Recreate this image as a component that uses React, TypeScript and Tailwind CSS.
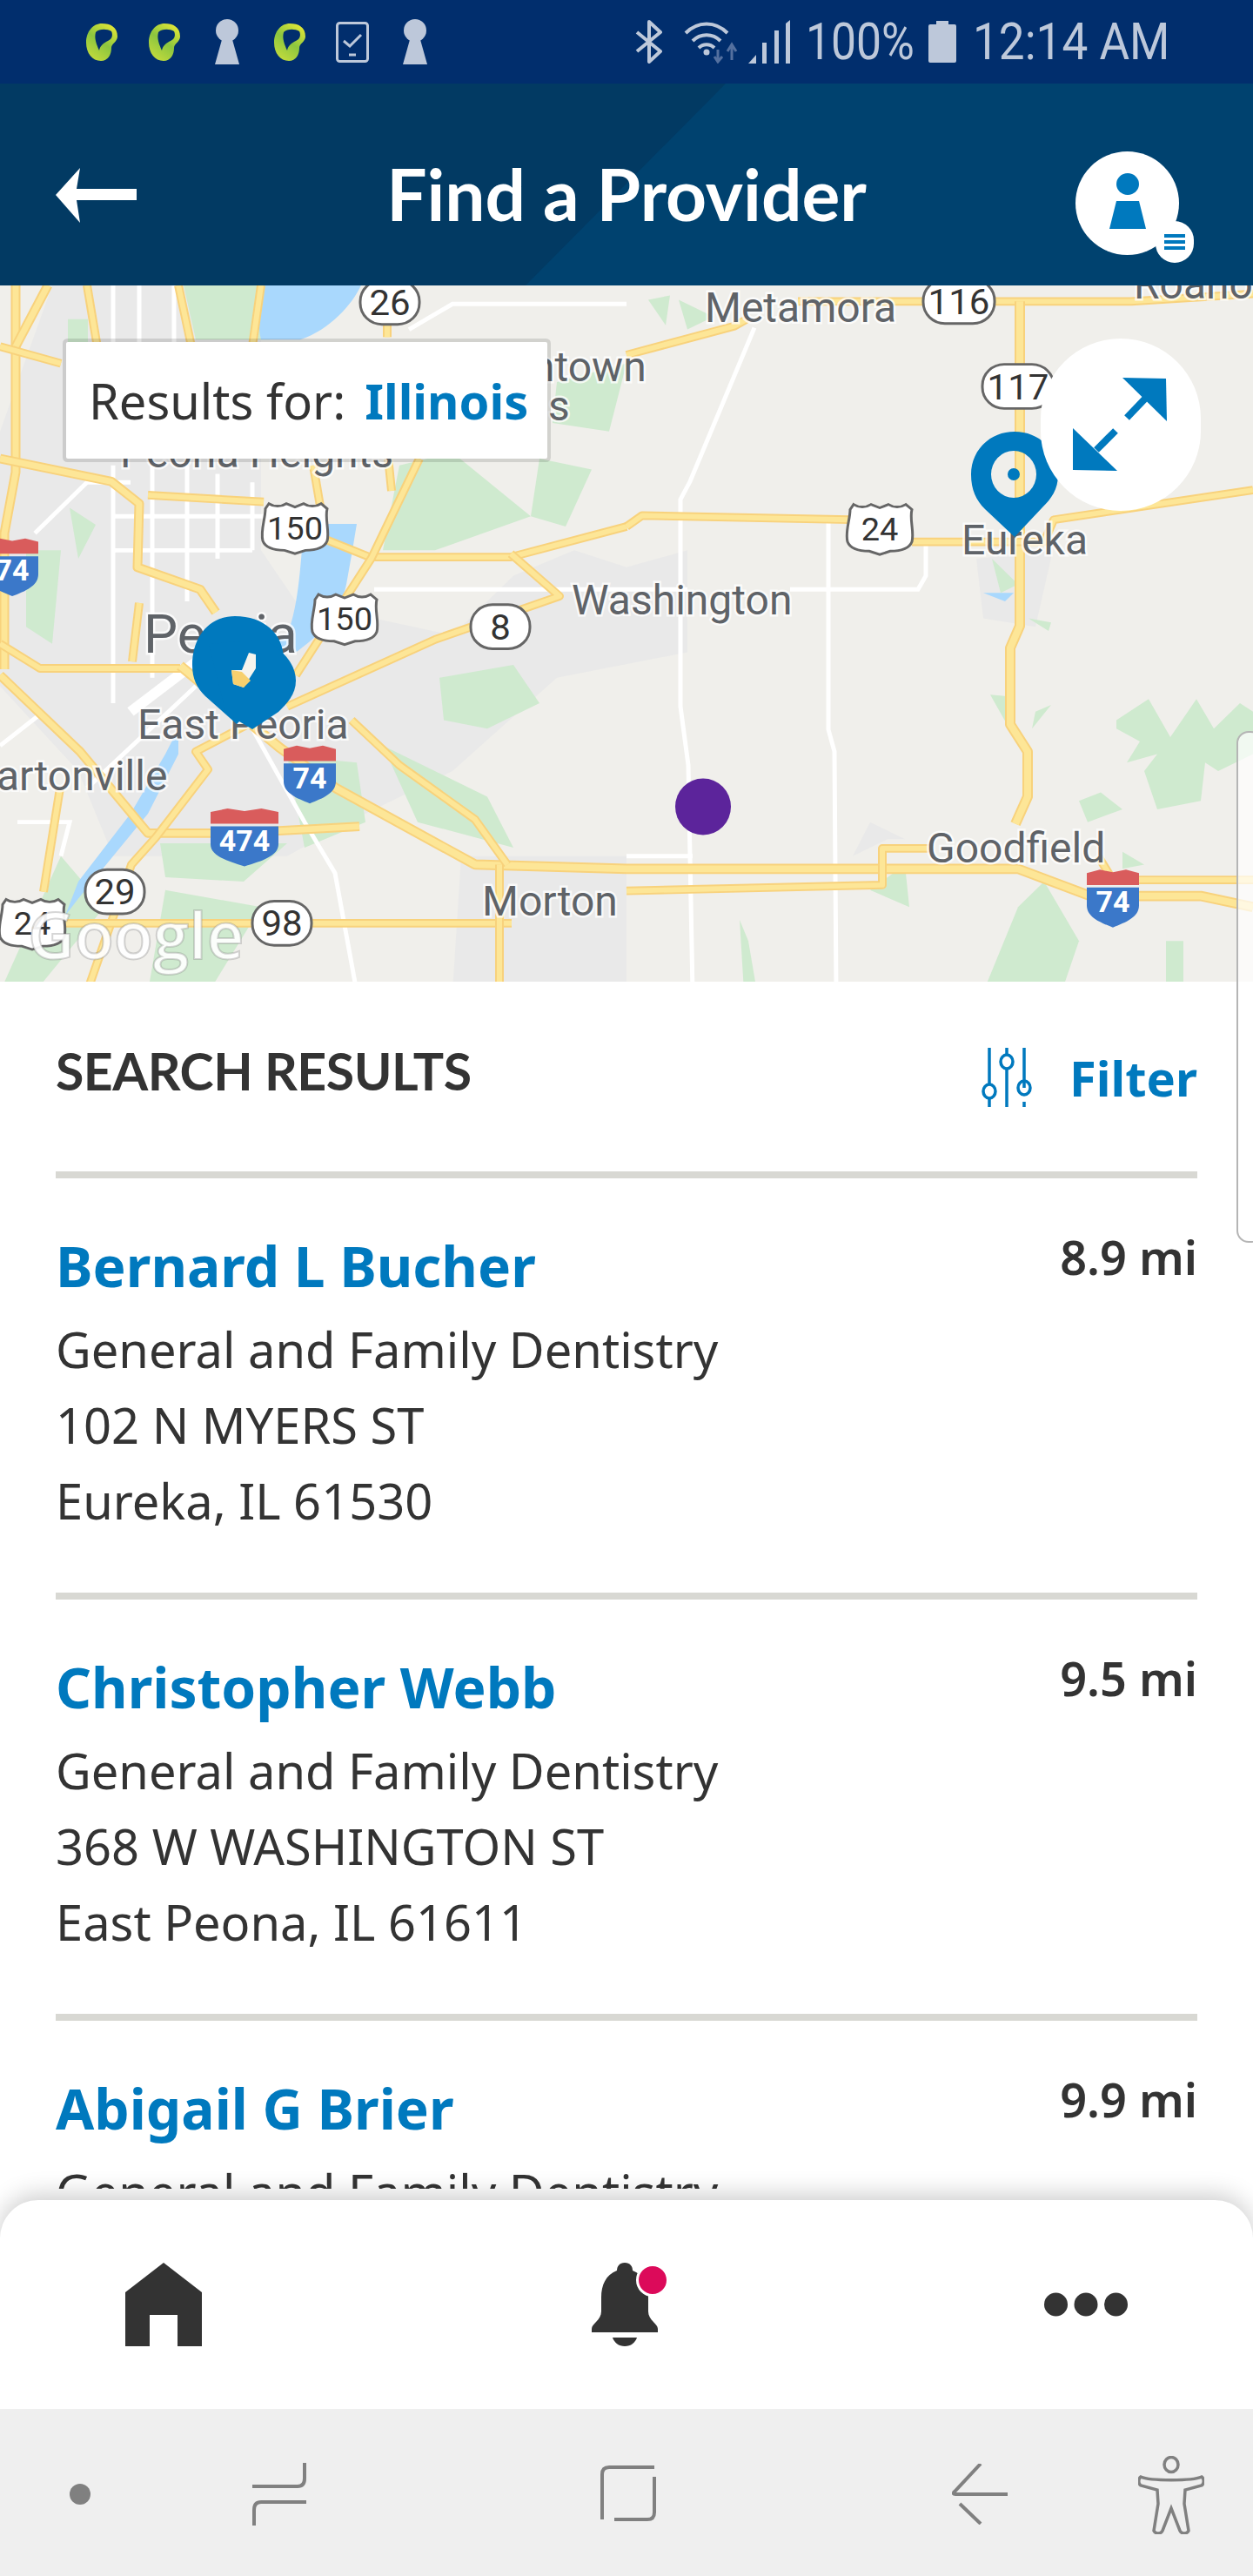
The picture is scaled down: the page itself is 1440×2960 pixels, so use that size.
const providers = [
  { name: "Bernard L Bucher", dist: "8.9 mi", specialty: "General and Family Dentistry", street: "102 N MYERS ST", city: "Eureka, IL 61530" },
  { name: "Christopher Webb", dist: "9.5 mi", specialty: "General and Family Dentistry", street: "368 W WASHINGTON ST", city: "East Peona, IL 61611" },
  { name: "Abigail G Brier", dist: "9.9 mi", specialty: "General and Family Dentistry", street: "", city: "" },
];

function Leaf({ id }: { id: string }) {
  return (
    <svg width="36" height="43" viewBox="0 0 36 43">
      <defs>
        <linearGradient id={id} x1="0.8" y1="0" x2="0.2" y2="1">
          <stop offset="0" stopColor="#e4e836" />
          <stop offset="0.5" stopColor="#8cc63f" />
          <stop offset="1" stopColor="#c6dc3c" />
        </linearGradient>
      </defs>
      <path
        fillRule="evenodd"
        fill={`url(#${id})`}
        d="M18 0C28 0 36 4 36 15C36 21 29 23 29 28C29 36 25 43 17 43C7 43 0 34 0 22C0 9 8 0 18 0ZM11 10C9 17 12 24 15 31C16 25 21 22 25 20C30 18 31 13 29 9C24 6 15 6 11 10Z"
      />
    </svg>
  );
}

function Keyhole() {
  return (
    <svg width="28" height="52" viewBox="0 0 28 52" fill="#bdc8da">
      <circle cx="14" cy="13" r="13" />
      <path d="M9 20H19L28 52H0Z" />
    </svg>
  );
}

function StatusBar() {
  return (
    <div className="flex h-[96px] items-center justify-between bg-[#012e6d] pl-[99px] pr-[100px] text-[#bdc8da]">
      <div className="flex items-center">
        <Leaf id="leaf-a" />
        <div className="ml-[36px]"><Leaf id="leaf-b" /></div>
        <div className="ml-[40px]"><Keyhole /></div>
        <div className="ml-[40px]"><Leaf id="leaf-c" /></div>
        <svg className="ml-[35px]" width="38" height="47" viewBox="0 0 38 47" fill="none" stroke="#bdc8da">
          <rect x="1.5" y="1.5" width="35" height="44" rx="3" strokeWidth="3" />
          <path d="M9 22L16 28L29 15" strokeWidth="3" />
          <path d="M15 38H23" strokeWidth="3" />
        </svg>
        <div className="ml-[39px]"><Keyhole /></div>
      </div>
      <div className="flex items-center">
        <svg width="32" height="50" viewBox="0 0 32 50" fill="none" stroke="#bdc8da" strokeWidth="4">
          <path d="M2 14L29 36L16 48V2L29 14L2 36" strokeLinejoin="round" />
        </svg>
        <svg className="ml-[24px]" width="64" height="50" viewBox="0 0 64 50" fill="none">
          <path d="M2 15C16 1 36 1 50 15" stroke="#bdc8da" strokeWidth="4" />
          <path d="M10 24C19 15 33 15 42 24" stroke="#bdc8da" strokeWidth="4" />
          <path d="M17 32C22 27 30 27 35 32" stroke="#bdc8da" strokeWidth="4" />
          <circle cx="26" cy="37" r="3.5" fill="#bdc8da" />
          <path d="M39 34V46M35 42L39 48L44 42" stroke="#54709f" strokeWidth="3" />
          <path d="M55 46V30M50 36L55 28L60 36" stroke="#54709f" strokeWidth="3" />
        </svg>
        <svg className="ml-[10px]" width="48" height="50" viewBox="0 0 48 50" fill="#bdc8da">
          <path d="M0 50L9 40V50Z" />
          <rect x="16" y="26" width="5" height="24" />
          <rect x="30" y="12" width="5" height="38" />
          <path d="M43 4L48 0V50H43Z" />
        </svg>
        <span className="ml-[18px] w-[132px] origin-left scale-x-[0.86] font-['Roboto',sans-serif] text-[60px] leading-[50px] whitespace-nowrap">100%</span>
        <svg className="ml-[9px]" width="32" height="48" viewBox="0 0 32 48" fill="#bdc8da">
          <path d="M9 0H23V4H30Q32 4 32 6V46Q32 48 30 48H2Q0 48 0 46V6Q0 4 2 4H9Z" />
        </svg>
        <span className="ml-[19px] w-[222px] origin-left scale-x-[0.885] font-['Roboto',sans-serif] text-[60px] leading-[50px] whitespace-nowrap">12:14 AM</span>
      </div>
    </div>
  );
}

function Header() {
  return (
    <div className="relative flex h-[232px] items-center bg-[#00426f]">
      <div className="absolute inset-0 bg-[#023a63] [clip-path:polygon(0_0,834px_0,604px_100%,0_100%)]" />
      <svg className="absolute left-[64px] top-[97px]" width="94" height="64" viewBox="0 0 94 64" fill="#fff">
        <path d="M0 31L28 0L24 24H93V37H24L28 63Z" />
      </svg>
      <h1 className="relative w-full pt-[20px] text-center font-['Lato',sans-serif] text-[82px] font-bold leading-none text-white">Find a Provider</h1>
      <div className="absolute left-[1236px] top-[78px] flex h-[119px] w-[119px] items-start justify-center rounded-full bg-white">
        <svg className="mt-[25px]" width="42" height="64" viewBox="0 0 42 64" fill="#0079be">
          <ellipse cx="21" cy="12.5" rx="13" ry="12.5" />
          <path d="M8 32H34L42 64H0Z" />
        </svg>
      </div>
      <div className="absolute left-[1328px] top-[158px] flex h-[48px] w-[44px] flex-col items-center justify-center gap-[3px] rounded-full bg-white">
        <div className="h-[4px] w-[24px] bg-[#0079be]" />
        <div className="h-[4px] w-[24px] bg-[#0079be]" />
        <div className="h-[4px] w-[24px] bg-[#0079be]" />
      </div>
    </div>
  );
}

function Road({ d, w = 8 }: { d: string; w?: number }) {
  return (
    <>
      <path d={d} fill="none" stroke="#f8d27c" strokeWidth={w + 2} strokeLinejoin="round" />
      <path d={d} fill="none" stroke="#fde697" strokeWidth={w - 2} strokeLinejoin="round" />
    </>
  );
}

function Label({ x, y, size = 48, children }: { x: number; y: number; size?: number; children: string }) {
  return (
    <text x={x} y={y} fontSize={size} fill="#5f6368" stroke="#ffffff" strokeWidth="5" strokeOpacity="0.75" className="font-['Roboto',sans-serif] [paint-order:stroke]">
      {children}
    </text>
  );
}

function StateShield({ x, y, w = 68, label }: { x: number; y: number; w?: number; label: string }) {
  return (
    <g>
      <rect x={x - w / 2} y={y - 26} width={w} height={52} rx="25" fill="#fff" stroke="#666" strokeWidth="3" />
      <text x={x} y={y + 15} textAnchor="middle" fontSize="42" fill="#333" className="font-['Roboto',sans-serif]">{label}</text>
    </g>
  );
}

function UsShield({ x, y, label }: { x: number; y: number; label: string }) {
  return (
    <g transform={`translate(${x} ${y})`}>
      <path d="M-34 -22L-30 -28C-24 -24 -16 -24 -10 -28L0 -24L10 -28C16 -24 24 -24 30 -28L37 -22C34 -10 40 4 37 16C34 24 24 27 12 27L0 31L-12 27C-24 27 -34 24 -37 16C-40 4 -34 -10 -34 -22Z" fill="#fff" stroke="#666" strokeWidth="3" />
      <text y="14" textAnchor="middle" fontSize="38" fill="#333" className="font-['Roboto',sans-serif]">{label}</text>
    </g>
  );
}

function Interstate({ x, y, w = 60, label }: { x: number; y: number; w?: number; label: string }) {
  const h = w / 2;
  return (
    <g transform={`translate(${x} ${y})`}>
      <path d={`M${-h} -18V-32L${-h / 2} -36L0 -33L${h / 2} -36L${h} -32V-18Z`} fill="#d95c5c" />
      <path d={`M${-h} -15H${h}V6C${h} 20 ${h / 2} 26 0 32C${-h / 2} 26 ${-h} 20 ${-h} 6Z`} fill="#3b78c9" />
      <text y="14" textAnchor="middle" fontSize="34" fontWeight="700" fill="#fff" className="font-['Roboto',sans-serif]">{label}</text>
    </g>
  );
}

function MapArt() {
  return (
    <svg className="absolute inset-0 h-full w-full" viewBox="0 328 1440 800">
      <rect x="0" y="328" width="1440" height="800" fill="#f0efeb" />

      <g transform="translate(0 7.7) scale(1 0.976)">
        {/* built up areas */}
        <g fill="#e9e9e9">
          <path d="M60 328H300V640L340 700L520 740L590 670L660 640L720 660L790 640V760L640 790L520 900L400 960L330 1000L130 1000L90 900L0 800V500Z" />
          <path d="M530 1000H720V1160H520Z" />
          <path d="M1122 650L1210 640L1190 730L1130 720Z" />
          <path d="M1040 980H1020L980 1000L1000 960Z" />
        </g>

        {/* parks and woods */}
        <g fill="#cfeacf">
          <path d="M78 368H101V420H78Z" />
          <path d="M211 328H300L310 392H225Z" />
          <path d="M459 540L520 525L610 600L500 640L440 640Z" />
          <path d="M620 532L680 545L650 612L610 600Z" />
          <path d="M640 442L720 420L700 500L635 490Z" />
          <path d="M505 790L590 775L620 820L560 850L510 840Z" />
          <path d="M330 882L410 890L420 960L350 990Z" />
          <path d="M184 985L330 985L280 1030L190 1025Z" />
          <path d="M30 640H70L60 750L30 730Z" />
          <path d="M80 590L110 610L90 650Z" />
          <path d="M440 870L560 930L590 990L480 960Z" />
          <path d="M70 1000L120 1060L40 1160H0Z" />
          <path d="M190 1040L300 1060L240 1160H170Z" />
          <path d="M745 345L770 340L765 375Z" />
          <path d="M780 345L820 365L790 380Z" />
          <path d="M1140 650L1170 680L1150 690Z" />
          <path d="M1182 720L1208 725L1205 735Z" />
          <path d="M1138 810L1160 812L1160 850Z" />
          <path d="M1190 830L1208 822L1186 850Z" />
          <path d="M1283 840L1320 815L1345 860L1375 815L1395 850L1425 820L1440 830V880L1400 900L1385 890L1380 935L1330 945L1315 900L1330 880L1295 890L1310 865L1283 850Z" />
          <path d="M1240 935L1265 925L1290 945L1250 960Z" />
          <path d="M1290 995L1315 1010L1290 1015Z" />
          <path d="M1130 1160L1170 1060L1200 1030L1240 1100L1220 1160Z" />
          <path d="M1340 1100L1360 1100L1360 1160H1340Z" />
          <path d="M1000 1040L1040 1010L1045 1060Z" />
          <path d="M850 1075L860 1100L870 1160H855Z" />
        </g>

        {/* water */}
        <g fill="#a9d8fd">
          <path d="M298 328H415C405 350 380 380 345 392H300C295 370 300 350 298 328Z" />
          <path d="M350 609H410L405 640L398 680C390 720 360 745 340 760L295 760L330 740C345 700 345 650 350 609Z" />
          <path d="M205 850L190 880L150 950L90 1030L75 1070L90 1050L170 950L205 880Z" />
          <path d="M1130 690L1165 690L1155 700Z" />
        </g>

        {/* minor roads */}
        <g fill="none" stroke="#fff" strokeWidth="5">
          <path d="M867 378L793 559L782 580V824L791 893L796 1160" />
          <path d="M952 606V851L959 877L961 1160" />
          <path d="M908 686H1055L1064 670V633" />
          <path d="M470 380L520 350H720" />
          <path d="M430 686H790" />
          <path d="M720 1000H796" />
          <path d="M130 328V420M160 328V420M200 328V420" />
          <path d="M130 540V820M175 540V790M215 540V700M250 550V650M290 560V640M130 600H330M130 640H290M100 920L225 800" />
          <path d="M40 620L100 560H150" />
          <path d="M290 850L350 960L385 1020L410 1160" />
          <path d="M20 960H80L70 1000M0 870L50 830" />
        </g>
        <path d="M150 830L240 760" stroke="#fff" strokeWidth="12" />

        {/* highways */}
        <Road d="M18 328V548L5 620V780" w={9} />
        <Road d="M55 328L18 400" w={9} />
        <Road d="M0 400L70 420" />
        <Road d="M0 532L128 559L160 585L158 660L230 686L248 713" w={9} />
        <Road d="M170 575L303 583" />
        <Road d="M376 628L425 648H587L720 612" />
        <Road d="M587 644L643 694L500 745L330 824" />
        <Road d="M0 750L46 779H207" />
        <Road d="M160 702L152 771" />
        <Road d="M340 787L427 649L482 532" />
        <Road d="M445 340V389" />
        <Road d="M445 520L450 570" />
        <Road d="M0 787L92 877L170 973H270L413 965" w={9} />
        <Road d="M207 776L321 872L386 920L546 1010L720 1015H1170L1253 1047H1380L1440 1060" w={10} />
        <Road d="M720 1041L1014 1034V991H1069" />
        <Road d="M404 840L459 893L546 957L583 1010" />
        <Road d="M294 840L225 877L239 898L179 978L151 1010L100 1160" />
        <Road d="M69 920L50 1042" />
        <Road d="M0 1079H574L588 1079" />
        <Road d="M574 1010V1160" />
        <Road d="M720 410L844 376L858 368" />
        <Road d="M917 347H1300L1440 338" />
        <Road d="M1172 347V729L1161 755V845L1181 877V930L1167 962" w={10} />
        <Road d="M1262 1000L1280 1030" />
        <Road d="M720 612L738 599L977 604" />
        <Road d="M1048 630H1200L1211 604L1440 569" />
        <Road d="M1307 1028H1440" />
        <Road d="M100 328L120 450" />
        <Road d="M205 328L220 400" />
        <Road d="M300 328L290 400" />
        <Road d="M360 540L370 600" />

        {/* route shields */}
        <StateShield x={448} y={348} label="26" />
        <StateShield x={132} y={1042} label="29" />
        <StateShield x={324} y={1079} label="98" />
        <StateShield x={575} y={730} label="8" />
        <StateShield x={1102} y={347} w={82} label="116" />
        <StateShield x={1170} y={447} w={82} label="117" />
        <UsShield x={339} y={613} label="150" />
        <UsShield x={396} y={720} label="150" />
        <UsShield x={1011} y={614} label="24" />
        <UsShield x={37} y={1079} label="24" />
        <Interstate x={14} y={662} label="74" />
        <Interstate x={356} y={906} label="74" />
        <Interstate x={281} y={980} w={78} label="474" />
        <Interstate x={1279} y={1052} label="74" />
      </g>

      {/* place names */}
      <Label x={810} y={370}>Metamora</Label>
      <Label x={1303} y={343}>Roano</Label>
      <Label x={611} y={438}>ntown</Label>
      <Label x={630} y={483}>s</Label>
      <Label x={138} y={537}>Peoria Heights</Label>
      <Label x={657} y={706}>Washington</Label>
      <Label x={1105} y={637}>Eureka</Label>
      <Label x={1065} y={991}>Goodfield</Label>
      <Label x={554} y={1052}>Morton</Label>
      <Label x={158} y={849}>East Peoria</Label>
      <Label x={165} y={750} size={62}>Peoria</Label>
      <Label x={-4} y={908}>artonville</Label>

      <text x={32} y={1102} fontSize="74" fontWeight="600" fill="#ffffff" fillOpacity="0.92" stroke="#777" strokeOpacity="0.3" strokeWidth="2" className="font-['Open_Sans',sans-serif]">Google</text>

      {/* pins */}
      <path d="M270 708C303 708 326 728 326 758C326 778 318 788 308 797L272 832L236 800C226 790 221 780 221 764C221 732 240 708 270 708Z" fill="#0079be" />
      <path d="M300 735C322 742 340 762 340 782C340 798 330 808 320 818L290 838L260 820L240 740Z" fill="#0079be" />
      <path fillRule="evenodd" fill="#0079be" transform="translate(0 -3)" d="M1166 499C1194 499 1216 520 1216 548C1216 566 1208 576 1198 586L1166 620L1132 588C1122 578 1116 566 1116 548C1116 520 1138 499 1166 499ZM1165 521A26 27 0 1 0 1165 575A26 27 0 1 0 1165 521ZM1165 541A7 7 0 1 1 1165 555A7 7 0 1 1 1165 541Z" />
      <path d="M286 750L294 752L294 768L280 790L268 786L266 770L278 770Z" fill="#f6f4ee" />
      <path d="M266 770L278 772L288 782L280 790L268 786Z" fill="#f7d06e" />

      {/* current location */}
      <ellipse cx={808} cy={927} rx={32} ry={32.5} fill="#5c249b" />
    </svg>
  );
}

function MapPanel() {
  return (
    <div className="relative h-[800px] overflow-hidden">
      <MapArt />
      <div className="absolute left-[76px] top-[65px] flex h-[134px] w-[553px] items-center rounded-[2px] bg-white pl-[26px] font-['Noto_Sans',sans-serif] text-[56px] text-[#333] shadow-[0_0_0_4px_rgba(0,0,0,0.12)]">
        <span>Results for:</span>
        <span className="ml-[22px] font-bold text-[#0079be]">Illinois</span>
      </div>
      <div className="absolute left-[1196px] top-[61px] flex h-[198px] w-[184px] items-center justify-center rounded-full bg-white">
        <svg width="112" height="112" viewBox="0 0 112 112" fill="#0079be">
          <path d="M58 2L108 3L109 52Z" />
          <path d="M85 25L63 48" stroke="#0079be" strokeWidth="8" />
          <path d="M1 60L1 108L52 109Z" />
          <path d="M28 85L50 63" stroke="#0079be" strokeWidth="8" />
        </svg>
      </div>
    </div>
  );
}

function ResultsHeader() {
  return (
    <div className="flex h-[226px] items-start justify-between border-b-[8px] border-[#d8d8d3] pt-[68px]">
      <div className="font-['Lato',sans-serif] text-[59px] font-bold leading-[70px] tracking-[-0.5px] text-[#333]">SEARCH RESULTS</div>
      <div className="mt-[7px] flex items-center">
        <svg width="60" height="68" viewBox="0 0 60 68" fill="none" stroke="#0079be" strokeWidth="3.5">
          <path d="M10 0V42M10 58V68" />
          <path d="M30 0V8M30 24V68" />
          <path d="M50 0V46M50 62V68" />
          <ellipse cx="30" cy="16" rx="7" ry="8" />
          <ellipse cx="10" cy="50" rx="7" ry="8" />
          <ellipse cx="50" cy="46" rx="7" ry="8" />
        </svg>
        <span className="ml-[42px] font-['Noto_Sans',sans-serif] text-[56px] font-bold leading-[70px] text-[#0079be]">Filter</span>
      </div>
    </div>
  );
}

function ProviderRow({ p }: { p: (typeof providers)[number] }) {
  return (
    <div className="h-[484px] border-b-[8px] border-[#d8d8d3] pt-[60px]">
      <div className="flex items-start justify-between">
        <div className="font-['Noto_Sans',sans-serif] text-[64px] font-bold leading-[82px] text-[#0079be]">{p.name}</div>
        <div className="-mt-[5px] font-['Noto_Sans',sans-serif] text-[54px] font-semibold leading-[70px] text-[#333]">{p.dist}</div>
      </div>
      <div className="mt-[11px] font-['Noto_Sans',sans-serif] text-[56px] leading-[87px] text-[#333]">
        <div>{p.specialty}</div>
        <div>{p.street}</div>
        <div>{p.city}</div>
      </div>
    </div>
  );
}

function BottomNav() {
  return (
    <div className="relative mt-[13px] flex h-[240px] items-start rounded-t-[44px] bg-white shadow-[0_-6px_28px_rgba(0,0,0,0.2)]">
      <svg className="ml-[144px] mt-[72px]" width="88" height="96" viewBox="0 0 88 96" fill="#333">
        <path d="M44 0L88 34V96H60V60H28V96H0V34Z" />
      </svg>
      <div className="relative ml-[448px] mt-[72px] h-[96px] w-[78px]">
        <svg width="76" height="96" viewBox="0 0 76 96" fill="#333">
          <path d="M38 0C44 0 47 4 47 9C60 14 65 26 65 40V56C65 66 76 70 76 76V80H0V76C0 70 11 66 11 56V40C11 26 16 14 29 9C29 4 32 0 38 0Z" />
          <path d="M24 86H52C50 92 45 96 38 96C31 96 26 92 24 86Z" />
        </svg>
        <div className="absolute -right-[11px] top-[1px] h-[38px] w-[38px] rounded-full border-[3px] border-white bg-[#dc0a5a]" />
      </div>
      <svg className="ml-[442px] mt-[106px]" width="96" height="28" viewBox="0 0 96 28" fill="#333">
        <circle cx="13.5" cy="14" r="13.5" />
        <circle cx="48" cy="14" r="13.5" />
        <circle cx="82.5" cy="14" r="13.5" />
      </svg>
    </div>
  );
}

function SystemNav() {
  return (
    <div className="relative flex h-[192px] items-start bg-[#efefef]">
      <div className="ml-[80px] mt-[86px] h-[24px] w-[24px] rounded-full bg-[#808080]" />
      <svg className="ml-[186px] mt-[62px]" width="62" height="72" viewBox="0 0 62 72" fill="none" stroke="#808080" strokeWidth="4">
        <path d="M0 27H52Q60 27 60 18V0" />
        <path d="M62 45H10Q2 45 2 54V72" />
      </svg>
      <svg className="ml-[338px] mt-[65px]" width="64" height="65" viewBox="0 0 64 65" fill="none" stroke="#808080" strokeWidth="4">
        <path d="M2 62V10Q2 2 10 2H62" />
        <path d="M62 13V54Q62 62 54 62H16" />
      </svg>
      <svg className="ml-[340px] mt-[63px]" width="64" height="70" viewBox="0 0 64 70" fill="none" stroke="#808080" strokeWidth="4">
        <path d="M33 0L3 32Q0 35 4 35H64" />
        <path d="M9 46L33 69" />
      </svg>
      <svg className="ml-[150px] mt-[54px]" width="76" height="90" viewBox="0 0 76 90" fill="none" stroke="#808080" strokeWidth="3.5">
        <ellipse cx="38" cy="10" rx="8" ry="8.5" />
        <path d="M3 24C14 29 62 29 73 24C76 26 76 32 73 34L54 39L53 55L58 86C56 90 50 90 48 86L38 60L28 86C26 90 20 90 18 86L23 55L22 39L3 34C0 32 0 26 3 24Z" />
      </svg>
    </div>
  );
}

export default function App() {
  return (
    <div className="relative h-[2960px] w-[1440px] overflow-hidden bg-white">
      <StatusBar />
      <Header />
      <MapPanel />
      <div className="h-[1387px] overflow-hidden px-[64px]">
        <ResultsHeader />
        {providers.map((p) => (
          <ProviderRow key={p.name} p={p} />
        ))}
      </div>
      <BottomNav />
      <SystemNav />
      {/* edge panel handle */}
      <div className="absolute left-[1421px] top-[840px] h-[588px] w-[30px] rounded-[14px] border-2 border-[#b5b5b5] bg-white/70" />
    </div>
  );
}
